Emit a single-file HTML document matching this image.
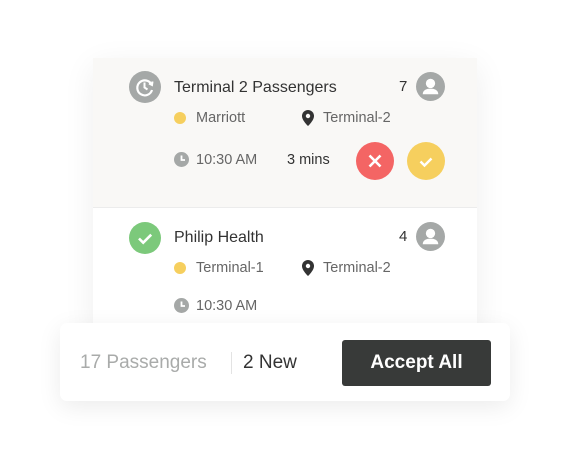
<!DOCTYPE html>
<html><head><style>
body{margin:0;width:570px;height:461px;background:#fff;position:relative;font-family:"Liberation Sans",sans-serif;overflow:hidden}
.abs{position:absolute}
.card{left:93px;top:58px;width:384px;height:272px;background:#fff;box-shadow:0 8px 30px rgba(0,0,0,0.07)}
.top{left:93px;top:58px;width:384px;height:149px;background:#f9f8f6;border-bottom:1px solid #ececec}
.t{font-size:16px;color:#333;white-space:nowrap}
.s{font-size:14.5px;color:#666;white-space:nowrap}
.dot{width:12px;height:12px;border-radius:50%;background:#f6cf5e}
</style></head><body>
<div class="abs card"></div>
<div class="abs top"></div>
<svg class="abs" style="left:129px;top:71px" width="32" height="32" viewBox="0 0 32 32"><circle cx="16" cy="16" r="16" fill="#a5a8a7"/><path d="M22.5 13.5A7.5 7.5 0 1 0 23 19" fill="none" stroke="#fff" stroke-width="2.2"/><path d="M20 12.5l3 1.5 0.5-3.5" fill="none" stroke="#fff" stroke-width="2"/><path d="M15.5 11.5v5l3 2" fill="none" stroke="#fff" stroke-width="2"/></svg>
<div class="abs t" style="left:174px;top:79px">Terminal 2 Passengers</div>
<div class="abs t" style="left:399px;top:78px;font-size:15px">7</div>
<svg class="abs" style="left:416px;top:72px" width="29" height="29" viewBox="0 0 28 28"><circle cx="14" cy="14" r="14" fill="#a5a8a7"/><circle cx="14" cy="11" r="4.5" fill="#fff"/><path d="M6.5 21.5c0-4 3.5-5.5 7.5-5.5s7.5 1.5 7.5 5.5z" fill="#fff"/></svg>
<div class="abs dot" style="left:174px;top:112px"></div>
<div class="abs s" style="left:196px;top:110px">Marriott</div>
<svg class="abs" style="left:302px;top:110px" width="12" height="16" viewBox="0 0 12 16"><path d="M6 0a6 6 0 0 0-6 6c0 4.5 6 10 6 10s6-5.5 6-10a6 6 0 0 0-6-6z" fill="#333"/><circle cx="6" cy="6" r="2.2" fill="#f9f8f6"/></svg>
<div class="abs s" style="left:323px;top:110px">Terminal-2</div>
<svg class="abs" style="left:174px;top:152px" width="15" height="15" viewBox="0 0 15 15"><circle cx="7.5" cy="7.5" r="7.5" fill="#a5a8a7"/><path d="M7.5 3.5v4.5h3.5" fill="none" stroke="#fff" stroke-width="1.8"/></svg>
<div class="abs s" style="left:196px;top:152px">10:30 AM</div>
<div class="abs s" style="left:287px;top:152px;color:#333">3 mins</div>
<svg class="abs" style="left:356px;top:142px" width="38" height="38" viewBox="0 0 38 38"><circle cx="19" cy="19" r="19" fill="#f46564"/><path d="M13.5 13.5l11 11M24.5 13.5l-11 11" stroke="#fff" stroke-width="2.6"/></svg>
<svg class="abs" style="left:407px;top:142px" width="38" height="38" viewBox="0 0 38 38"><circle cx="19" cy="19" r="19" fill="#f6cf5e"/><path d="M13.5 19.5l4 4 7-7" fill="none" stroke="#fff" stroke-width="2.4"/></svg>
<svg class="abs" style="left:129px;top:222px" width="32" height="32" viewBox="0 0 32 32"><circle cx="16" cy="16" r="16" fill="#7cc97b"/><path d="M10 16.5l4.2 4.2 8-8" fill="none" stroke="#fff" stroke-width="2.6"/></svg>
<div class="abs t" style="left:174px;top:229px">Philip Health</div>
<div class="abs t" style="left:399px;top:228px;font-size:15px">4</div>
<svg class="abs" style="left:416px;top:222px" width="29" height="29" viewBox="0 0 28 28"><circle cx="14" cy="14" r="14" fill="#a5a8a7"/><circle cx="14" cy="11" r="4.5" fill="#fff"/><path d="M6.5 21.5c0-4 3.5-5.5 7.5-5.5s7.5 1.5 7.5 5.5z" fill="#fff"/></svg>
<div class="abs dot" style="left:174px;top:262px"></div>
<div class="abs s" style="left:196px;top:260px">Terminal-1</div>
<svg class="abs" style="left:302px;top:260px" width="12" height="16" viewBox="0 0 12 16"><path d="M6 0a6 6 0 0 0-6 6c0 4.5 6 10 6 10s6-5.5 6-10a6 6 0 0 0-6-6z" fill="#333"/><circle cx="6" cy="6" r="2.2" fill="#fff"/></svg>
<div class="abs s" style="left:323px;top:260px">Terminal-2</div>
<svg class="abs" style="left:174px;top:298px" width="15" height="15" viewBox="0 0 15 15"><circle cx="7.5" cy="7.5" r="7.5" fill="#a5a8a7"/><path d="M7.5 3.5v4.5h3.5" fill="none" stroke="#fff" stroke-width="1.8"/></svg>
<div class="abs s" style="left:196px;top:298px">10:30 AM</div>
<div class="abs" style="left:60px;top:323px;width:450px;height:78px;background:#fff;border-radius:7px;box-shadow:0 6px 24px rgba(0,0,0,0.08)"></div>
<div class="abs" style="left:80px;top:352px;font-size:19px;color:#a9abaa;white-space:nowrap">17 Passengers</div>
<div class="abs" style="left:231px;top:352px;width:1px;height:22px;background:#e3e3e3"></div>
<div class="abs" style="left:243px;top:352px;font-size:19px;color:#333;white-space:nowrap">2 New</div>
<div class="abs" style="left:342px;top:340px;width:149px;height:46px;background:#383a39;border-radius:3px;color:#fff;font-size:19px;font-weight:bold;line-height:46px;text-align:center">Accept All</div>
</body></html>
